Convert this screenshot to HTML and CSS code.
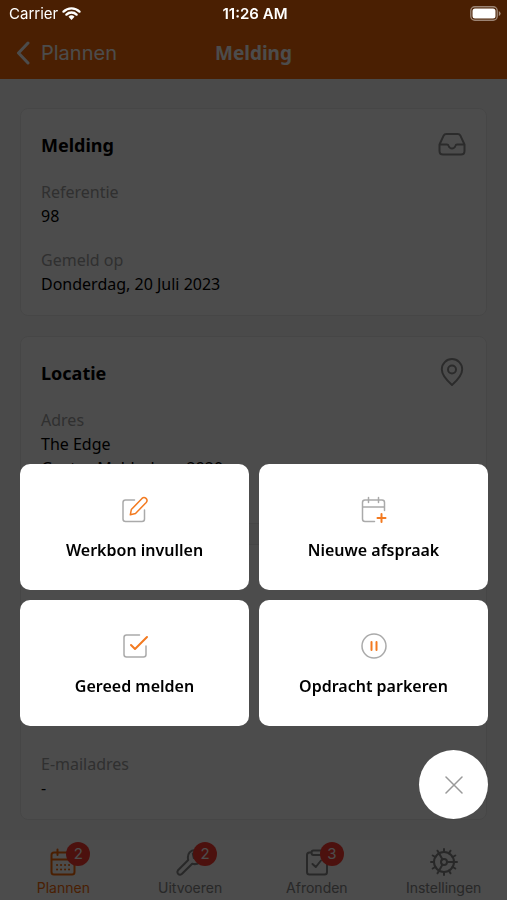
FILE: index.html
```html
<!DOCTYPE html>
<html lang="nl">
<head>
    <meta charset="UTF-8">
    <meta name="viewport" content="width=device-width, initial-scale=1.0">
    <title>Melding</title>
    <link rel="stylesheet" href="styles.css">
</head>
<body>
    <div class="statusbar">
        <span class="carrier">Carrier
            <svg class="wifi" viewBox="0 0 20 16" width="19" height="15">
                <path d="M1.5 6 A12 12 0 0 1 18.5 6 M4.6 9.2 A7.6 7.6 0 0 1 15.4 9.2" fill="none" stroke="currentColor" stroke-width="2.5"/>
                <path d="M6.8 11.4 A4.6 4.6 0 0 1 13.2 11.4 L10 15 Z" fill="currentColor"/>
            </svg>
        </span>
        <span class="clock">11:26 AM</span>
        <svg class="battery" viewBox="0 0 31 15" width="31" height="15">
            <rect x="0.8" y="0.8" width="26.4" height="13.4" rx="4" fill="none" stroke="currentColor" stroke-opacity="0.45" stroke-width="1.4"/>
            <rect x="2.5" y="2.5" width="23" height="10" rx="2.5" fill="currentColor"/>
            <path d="M28.8 5 Q30.6 6 30.6 7.5 Q30.6 9 28.8 10 Z" fill="currentColor" fill-opacity="0.5"/>
        </svg>
    </div>

    <header class="navbar">
        <a class="back" href="#">
            <svg viewBox="0 0 14 24" width="14" height="24"><path d="M12 2 L2.5 12 L12 22" fill="none" stroke="currentColor" stroke-width="3" stroke-linecap="round" stroke-linejoin="round"/></svg>
            Plannen
        </a>
        <h1>Melding</h1>
    </header>

    <main class="content">
        <section class="card">
            <div class="card-head">
                <h2>Melding</h2>
                <svg class="icon" viewBox="0 0 28 28" width="28" height="28">
                    <path d="M1.5 14.5 V21 Q1.5 24.5 5 24.5 H23 Q26.5 24.5 26.5 21 V14.5 L22.5 5.8 Q21.6 4 19.6 4 H8.4 Q6.4 4 5.5 5.8 Z M1.5 14.5 H9 Q10.2 14.5 10.7 16 Q11.6 18.5 14 18.5 Q16.4 18.5 17.3 16 Q17.8 14.5 19 14.5 H26.5"/>
                </svg>
            </div>
            <dl>
                <dt>Referentie</dt>
                <dd>98</dd>
                <dt>Gemeld op</dt>
                <dd>Donderdag, 20 Juli 2023</dd>
            </dl>
        </section>

        <section class="card">
            <div class="card-head">
                <h2>Locatie</h2>
                <svg class="icon" viewBox="0 0 28 28" width="28" height="28">
                    <path d="M14 27 C10 23.5 3.8 17.2 3.8 11.3 A10.2 10.2 0 0 1 24.2 11.3 C24.2 17.2 18 23.5 14 27 Z"/>
                    <circle cx="14" cy="11.5" r="4"/>
                </svg>
            </div>
            <dl>
                <dt>Adres</dt>
                <dd>The Edge<br>Gustav Mahlerlaan 2920<br>Amsterdam</dd>
            </dl>
        </section>

        <section class="card card-fill">
            <div class="card-head">
                <h2>Contact</h2>
            </div>
            <dl>
                <dt>E-mailadres</dt>
                <dd>-</dd>
            </dl>
        </section>
    </main>

    <nav class="tabbar">
        <a class="tab active" href="#">
            <span class="tab-icon">
                <svg viewBox="0 0 28 28" width="28" height="28">
                    <path d="M5 4.5 H23 Q25.5 4.5 25.5 7 V24 Q25.5 26.5 23 26.5 H5 Q2.5 26.5 2.5 24 V7 Q2.5 4.5 5 4.5 Z M2.5 11.5 H25.5 M8.5 1.5 V7 M19.5 1.5 V7"/>
                    <path d="M8 17 H8.1 M12 17 H12.1 M16 17 H16.1 M20 17 H20.1 M8 21.5 H8.1 M12 21.5 H12.1 M16 21.5 H16.1 M20 21.5 H20.1"/>
                </svg>
                <span class="badge">2</span>
            </span>
            Plannen
        </a>
        <a class="tab" href="#">
            <span class="tab-icon">
                <svg viewBox="0 0 28 28" width="28" height="28">
                    <path d="M2 22.2 L12.2 12 C10.8 6 14.5 1.2 20.5 2 L16.8 5.6 L17.8 10 L22.2 11.2 L26 7.5 C26.8 13.5 22 17.2 16.2 15.8 L5.8 26 Q3.8 27.4 2.2 25.9 Q0.7 24.2 2 22.2 Z"/>
                </svg>
                <span class="badge">2</span>
            </span>
            Uitvoeren
        </a>
        <a class="tab" href="#">
            <span class="tab-icon">
                <svg viewBox="0 0 28 28" width="28" height="28">
                    <path d="M8.5 4.5 H6.5 Q4 4.5 4 7 V24 Q4 26.5 6.5 26.5 H21.5 Q24 26.5 24 24 V7 Q24 4.5 21.5 4.5 H19.5 M10.5 2.5 H17.5 Q19.5 2.5 19.5 4.5 Q19.5 7 17.5 7 H10.5 Q8.5 7 8.5 4.5 Q8.5 2.5 10.5 2.5 Z M9.5 16 L12.8 19 L18 12.5"/>
                </svg>
                <span class="badge">3</span>
            </span>
            Afronden
        </a>
        <a class="tab" href="#">
            <span class="tab-icon">
                <svg viewBox="0 0 28 28" width="28" height="28">
                    <circle cx="14" cy="14" r="10"/>
                    <circle cx="14" cy="14" r="3"/>
                    <path d="M17 14 H24 M12.5 11.4 L9 5.3 M12.5 16.6 L9 22.7"/>
                    <path d="M14 4 V1 M14 24 V27 M4 14 H1 M24 14 H27 M19 5.3 L20.5 2.7 M22.7 9 L25.3 7.5 M22.7 19 L25.3 20.5 M19 22.7 L20.5 25.3 M9 22.7 L7.5 25.3 M5.3 19 L2.7 20.5 M5.3 9 L2.7 7.5 M9 5.3 L7.5 2.7"/>
                </svg>
            </span>
            Instellingen
        </a>
    </nav>

    <div class="overlay">
        <div class="actions">
            <button class="action" type="button">
                <svg viewBox="0 0 28 28" width="28" height="28">
                    <path d="M13.5 4 H4.5 Q2 4 2 6.5 V23 Q2 25.5 4.5 25.5 H21 Q23.5 25.5 23.5 23 V14"/>
                    <path class="accent" d="M9.3 18.8 L10.3 13.6 L21 2.4 Q23 0.6 25 2.4 Q27 4.4 25.2 6.5 L14.5 17.5 Z"/>
                </svg>
                Werkbon invullen
            </button>
            <button class="action" type="button">
                <svg viewBox="0 0 28 28" width="28" height="28">
                    <path d="M14.5 25.5 H5 Q2.5 25.5 2.5 23 V6.5 Q2.5 4 5 4 H22 Q24.5 4 24.5 6.5 V14.5 M2.5 11 H24.5 M8.5 1.5 V6.5 M18.5 1.5 V6.5"/>
                    <path class="accent thick" d="M21.5 18 V26 M17.5 22 H25.5"/>
                </svg>
                Nieuwe afspraak
            </button>
            <button class="action" type="button">
                <svg viewBox="0 0 28 28" width="28" height="28">
                    <path d="M18.5 3 H5.5 Q3 3 3 5.5 V22.5 Q3 25 5.5 25 H22.5 Q25 25 25 22.5 V14"/>
                    <path class="accent thick" d="M10 13 L14 17 L26 5"/>
                </svg>
                Gereed melden
            </button>
            <button class="action" type="button">
                <svg viewBox="0 0 28 28" width="28" height="28">
                    <circle cx="14" cy="14" r="12"/>
                    <path class="accent thick" d="M11.5 10 V18 M16.5 10 V18"/>
                </svg>
                Opdracht parkeren
            </button>
        </div>
        <button class="close" type="button" aria-label="Sluiten">
            <svg viewBox="0 0 18 18" width="18" height="18"><path d="M1 1 L17 17 M17 1 L1 17"/></svg>
        </button>
    </div>
</body>
</html>
```
FILE: styles.css
```css
* { box-sizing: border-box; }
body { margin: 0; height: 100vh; display: flex; flex-direction: column; overflow: hidden; background: #f8f8f8; color: #000; font-family: "Noto Sans", sans-serif; font-size: 16px; line-height: 24px; }
h1, h2, dl, dd { margin: 0; }
a { color: inherit; text-decoration: none; }
svg { display: block; fill: none; stroke-linecap: round; stroke-linejoin: round; }

.statusbar { position: fixed; top: 0; left: 0; right: 0; z-index: 3; display: grid; grid-template-columns: 1fr auto 1fr; align-items: center; height: 27px; padding: 0 6px 0 9px; color: #fff; font-family: Inter, sans-serif; font-size: 15px; }
.carrier { display: flex; align-items: center; gap: 4px; }
.clock { font-weight: 600; }
.battery { justify-self: end; }

.navbar { flex: none; display: grid; grid-template-columns: 1fr auto 1fr; align-items: center; height: 79px; padding: 26px 16px 0; background: #f76a08; color: #fff; }
.navbar h1 { font-size: 19px; line-height: 26px; font-weight: 700; }
.back { display: flex; align-items: center; gap: 11px; font-family: Inter, sans-serif; font-size: 20px; }

.content { flex: 1; min-height: 0; overflow: hidden; padding: 29px 20px 20px; display: flex; flex-direction: column; gap: 20px; }
.card { flex: none; padding: 21px 20px 19px; background: #fff; border: 1px solid #ececec; border-radius: 8px; }
.card-head { display: flex; justify-content: space-between; height: 28px; margin-bottom: 22px; }
.card-head h2 { font-size: 18px; line-height: 30px; font-weight: 700; }
.card-fill { flex: 1; display: flex; flex-direction: column; justify-content: space-between; }
.icon { stroke: #909090; stroke-width: 2; }
.card dt { color: #a0a0a0; }
.card dd + dt { margin-top: 20px; }

.tabbar { flex: none; display: grid; grid-template-columns: repeat(4, 1fr); height: 60px; padding-top: 8px; background: #fdfdfd; color: #858585; font-family: Inter, sans-serif; font-size: 14px; line-height: 20px; }
.tab { display: flex; flex-direction: column; align-items: center; gap: 2px; }
.tab.active { color: #f76a08; }
.tab-icon { position: relative; }
.tab-icon svg { stroke: currentColor; stroke-width: 2; }
.badge { position: absolute; top: -6px; left: 17px; width: 24px; height: 24px; border-radius: 50%; background: #ff3b30; color: #fff; font-size: 15px; line-height: 24px; text-align: center; }

.overlay { position: fixed; inset: 0; z-index: 2; display: flex; flex-direction: column; justify-content: flex-end; gap: 24px; padding: 0 19px 81px 20px; background: rgba(0, 0, 0, 0.7); }
.actions { display: grid; grid-template-columns: 1fr 1fr; gap: 10px; }
.action { display: flex; flex-direction: column; align-items: center; justify-content: center; gap: 14px; height: 126px; padding: 4px 0 0; background: #fff; border: none; border-radius: 10px; color: #000; font: 600 16px/24px "Noto Sans", sans-serif; cursor: pointer; }
.action svg { stroke: #aaa; stroke-width: 1.5; }
.action .accent { stroke: #f37a20; }
.action .thick { stroke-width: 2; }
.close { align-self: flex-end; display: flex; align-items: center; justify-content: center; width: 69px; height: 69px; padding: 0; background: #fff; border: none; border-radius: 50%; cursor: pointer; }
.close svg { stroke: #999; stroke-width: 1.5; }
```
